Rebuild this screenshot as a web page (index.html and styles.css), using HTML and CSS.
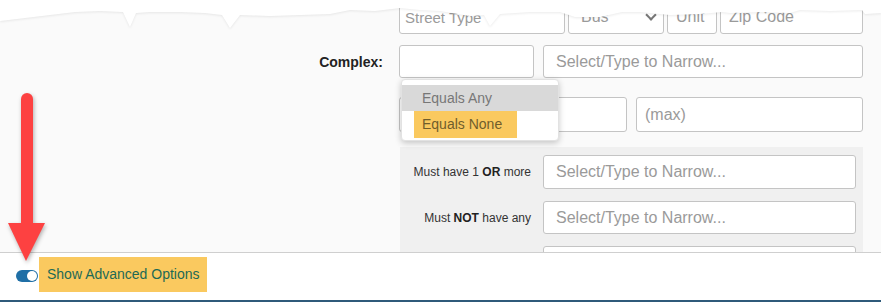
FILE: index.html
```html
<!DOCTYPE html>
<html lang="en">
<head>
  <meta charset="UTF-8" />
  <title>Search Options</title>
  <link rel="stylesheet" href="styles.css">
</head>
<body>

<div class="page">
  <section class="search">
    <div class="row row-top">
      <div class="label"></div>
      <div class="fields">
        <input class="field f-type" type="text" placeholder="Street Type" />
        <div class="field f-dir"><span class="sel-text">Bus</span><span class="chev"></span></div>
        <input class="field f-unit" type="text" placeholder="Unit" />
        <input class="field f-zip" type="text" placeholder="Zip Code" />
      </div>
    </div>

    <div class="row row-complex">
      <div class="label"><strong>Complex:</strong></div>
      <div class="fields">
        <input class="field f-mode" type="text" />
        <input class="field f-narrow" type="text" placeholder="Select/Type to Narrow..." />
      </div>
    </div>

    <div class="row row-range">
      <div class="label"></div>
      <div class="fields">
        <input class="field f-min" type="text" />
        <input class="field f-max" type="text" placeholder="(max)" />
      </div>
    </div>

    <div class="row">
      <div class="label"></div>
      <div class="panel">
        <div class="panel-row">
          <span class="panel-label">Must have 1 <b>OR</b> more</span>
          <input class="field f-narrow" type="text" placeholder="Select/Type to Narrow..." />
        </div>
        <div class="panel-row">
          <span class="panel-label">Must <b>NOT</b> have any</span>
          <input class="field f-narrow" type="text" placeholder="Select/Type to Narrow..." />
        </div>
        <div class="panel-row">
          <span class="panel-label"></span>
          <input class="field f-narrow" type="text" />
        </div>
      </div>
    </div>

    <!-- open menu for the Complex match mode -->
    <ul class="menu">
      <li class="menu-item is-hover">Equals Any</li>
      <li class="menu-item"><span class="mark">Equals None</span></li>
    </ul>

    <svg class="torn" width="881" height="32" viewBox="0 0 881 32">
      <polygon points="0,0 881,0 881,13 865,14 862,10 830,11 800,10 790,13 760,12 730,13 722,12 700,14 670,15 640,12 622,12 600,17 575,17 560,12 530,12 500,14 490,26 484,15 470,16 440,11 420,10 400,8 375,11 350,10 330,14 300,15 270,16 240,15 230,28 222,15 205,13 180,12 150,12 136,13 130,27 123,12 100,11 75,12 50,15 25,18 0,21"/>
    </svg>
  </section>

  <footer class="advanced">
    <span class="toggle"><span class="knob"></span></span>
    <span class="mark adv-label">Show Advanced Options</span>
  </footer>

  <svg class="arrow" width="50" height="180" viewBox="0 0 50 180">
    <line x1="27" y1="14" x2="27" y2="145" />
    <polygon points="8,138 45,138 26,176" />
  </svg>
</div>

</body>
</html>
```

FILE: styles.css
```css
body {
  margin: 0;
  padding: 0;
  background: #fff;
  font-family: "Liberation Sans", Arial, sans-serif;
  color: #333;
}
.page {
  position: relative;
  width: 881px;
}
.search {
  position: relative;
  height: 252px;
  overflow: hidden;
  background: #fafafa;
}
.row {
  display: grid;
  grid-template-columns: 383px 464px;
  column-gap: 16px;
}
.row-complex {
  margin-top: 11px;
}
.row-range {
  margin-top: 19px;
}
.label {
  display: flex;
  align-items: center;
  justify-content: flex-end;
  font-size: 14px;
  color: #222;
}
.fields {
  display: flex;
  gap: 9px;
}
.row-top .fields {
  gap: 3px;
}
.field {
  box-sizing: border-box;
  margin: 0;
  border: 1px solid #c4c4c4;
  border-radius: 3px;
  background: #fff;
  font-family: inherit;
  font-size: 16px;
  color: #333;
  outline: none;
}
.field::placeholder {
  color: #9a9a9a;
}
.row-top .field {
  height: 34px;
  padding: 0 8px;
}
.f-type { width: 166px; font-size: 15px; padding-left: 5px !important; }
.f-dir {
  width: 96px;
  display: flex;
  align-items: center;
  justify-content: space-between;
  color: #9a9a9a;
}
.f-dir .sel-text {
  padding-left: 4px;
}
.chev {
  width: 6px;
  height: 6px;
  border-right: 2px solid #777;
  border-bottom: 2px solid #777;
  transform: rotate(45deg);
  margin: 0 0 4px 0;
}
.f-unit { width: 50px; }
.f-zip { width: 143px; }
.row-complex .field { height: 33px; }
.f-mode { width: 135px; }
.f-narrow {
  width: 320px;
  padding: 0 12px;
}
.row-range .field {
  height: 35px;
  padding: 0 8px;
}
.f-min { width: 228px; }
.f-max { width: 227px; }

.panel {
  margin: 15px 0 0 1px;
  padding: 8px 7px 0 0;
  background: #f0f0f0;
  height: 120px;
}
.panel-row {
  display: grid;
  grid-template-columns: 131px 313px;
  column-gap: 12px;
  align-items: center;
  margin-bottom: 12px;
}
.panel-row .field {
  width: 313px;
  height: 34px;
}
.panel-row:nth-child(2) .field {
  height: 33px;
}
.panel-label {
  text-align: right;
  font-size: 12px;
  color: #333;
}
.panel-label b {
  color: #222;
}

.menu {
  position: absolute;
  left: 401px;
  top: 79px;
  width: 158px;
  height: 62px;
  box-sizing: border-box;
  margin: 0;
  padding: 5px 0 0;
  list-style: none;
  background: #fff;
  border: 1px solid #e2e2e2;
  border-radius: 4px;
  box-shadow: 0 2px 6px rgba(0, 0, 0, 0.22);
  font-size: 14px;
  color: #777;
}
.menu-item {
  height: 26px;
  line-height: 26px;
  padding-left: 20px;
}
.menu-item.is-hover {
  background: #d9d9d9;
}
.menu-item .mark {
  display: inline-block;
  margin-left: -8px;
  padding: 0 15px 0 8px;
  height: 27px;
  line-height: 27px;
  color: #705d2c;
}
.mark {
  background: #fac95f;
}

.torn {
  position: absolute;
  left: 0;
  top: 0;
  fill: #fff;
  filter: drop-shadow(0 1px 1px rgba(0, 0, 0, 0.08));
}

.advanced {
  display: flex;
  align-items: flex-start;
  height: 47px;
  border-top: 1px solid #cfcfcf;
  border-bottom: 2px solid #2f5a7a;
  background: #fff;
}
.toggle {
  position: relative;
  flex: none;
  width: 22px;
  height: 12px;
  margin: 17px 1px 0 16px;
  border-radius: 6px;
  background: #1f6fa6;
}
.knob {
  position: absolute;
  right: 1px;
  top: 1px;
  width: 10px;
  height: 10px;
  border-radius: 50%;
  background: #fff;
}
.adv-label {
  margin-top: 4px;
  height: 35px;
  line-height: 35px;
  padding: 0 7px 0 8px;
  font-size: 14px;
  color: #1e6a55;
}

.arrow {
  position: absolute;
  left: 0;
  top: 85px;
  filter: drop-shadow(1px 2px 2px rgba(0, 0, 0, 0.3));
}
.arrow line {
  stroke: #fd4141;
  stroke-width: 12;
  stroke-linecap: round;
}
.arrow polygon {
  fill: #fd4141;
}
```
